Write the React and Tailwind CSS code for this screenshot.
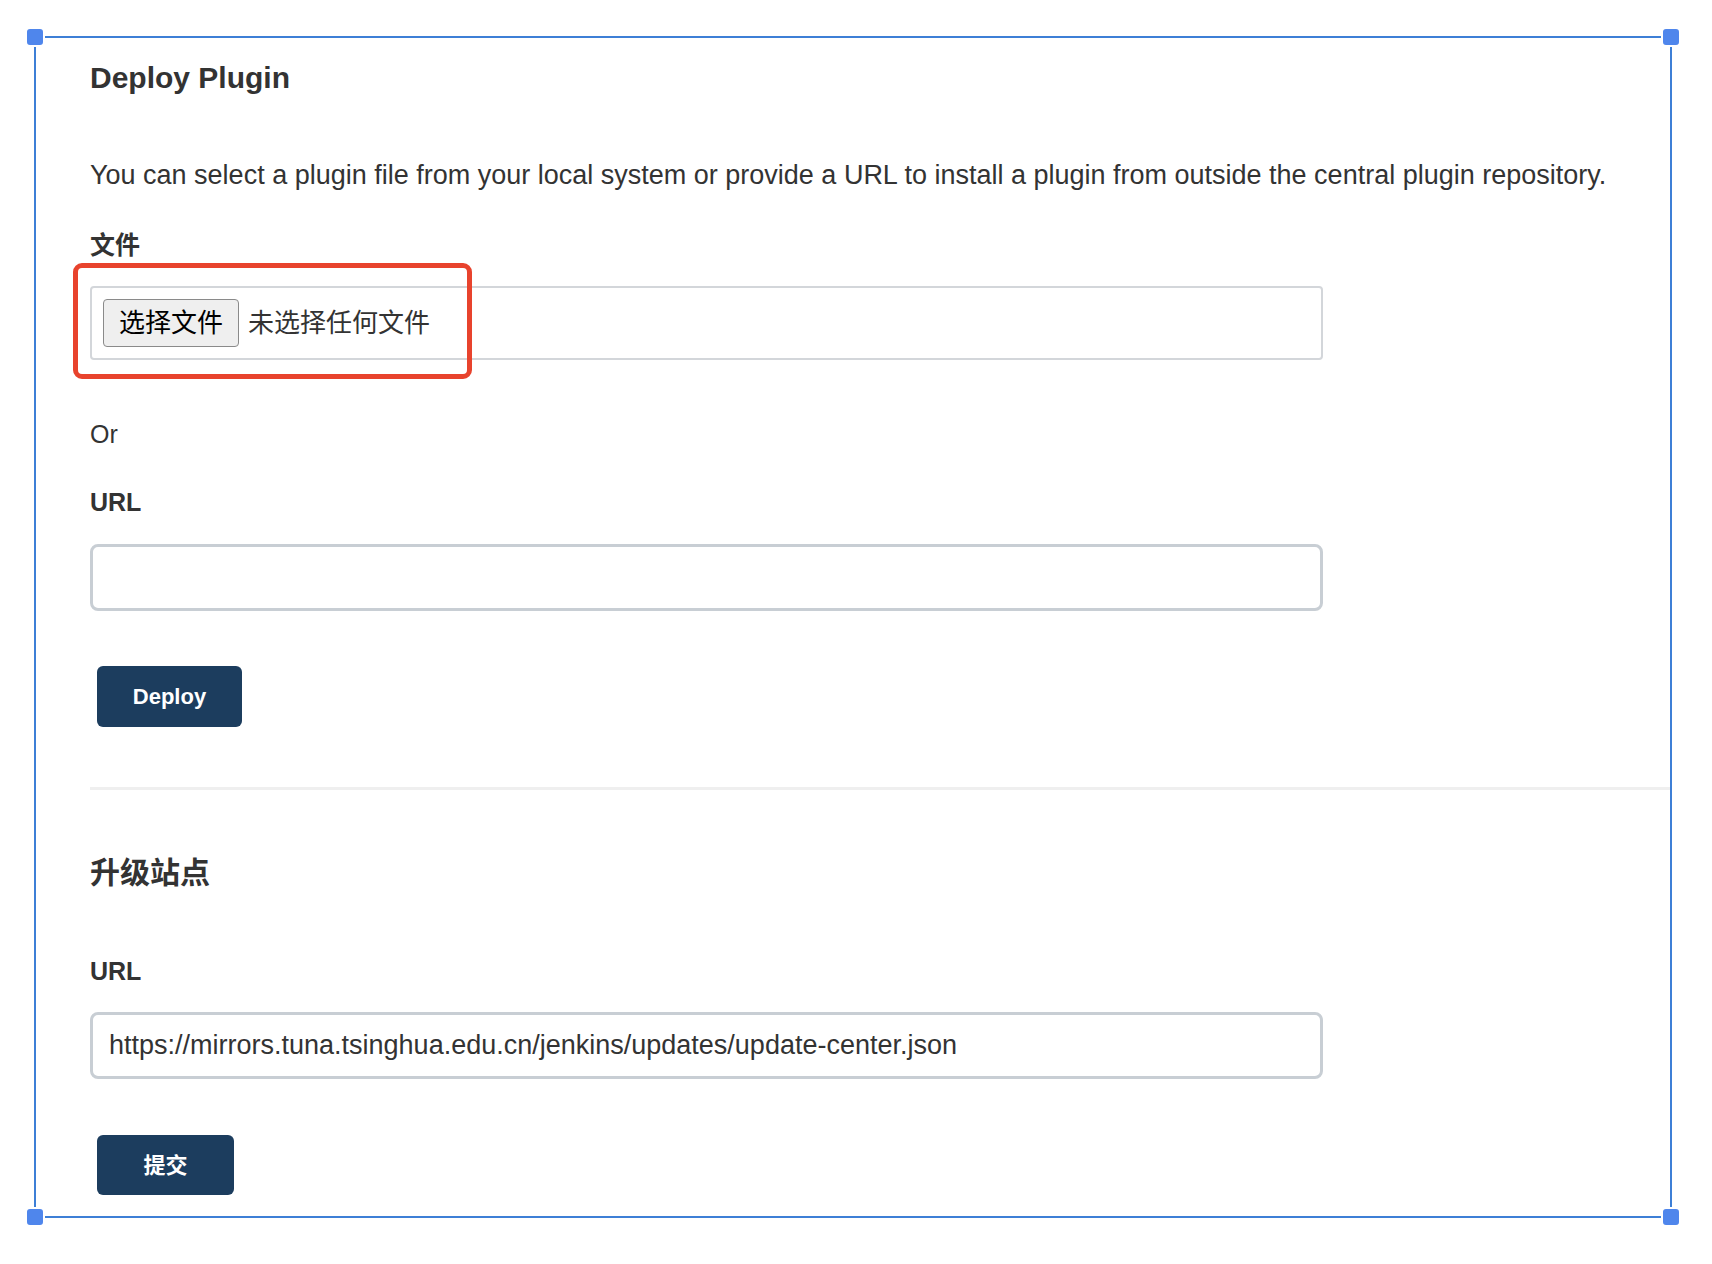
import React from 'react';

const font = "font-['Liberation_Sans','Noto_Sans_CJK_SC',sans-serif]";

function Handle({ className }) {
  return <div className={`absolute w-5 h-5 rounded-[5px] border-2 border-white bg-[#4f86ec] ${className}`} />;
}

export default function App() {
  return (
    <div className={`relative w-[1712px] h-[1264px] bg-white pt-[36px] pl-[34px] text-[#333] ${font}`}>
      {/* selection frame */}
      <div className="relative w-[1638px] h-[1182px] border-2 border-[#3d7fd6] pt-[22px] pl-[54px] flex flex-col items-start">
        <Handle className="-left-[11px] -top-[11px]" />
        <Handle className="-right-[11px] -top-[11px]" />
        <Handle className="-left-[11px] -bottom-[11px]" />
        <Handle className="-right-[11px] -bottom-[11px]" />

        <h1 className="text-[30px] leading-[36px] font-bold">Deploy Plugin</h1>

        <p className="mt-[64px] text-[27px] leading-[30px]">
          You can select a plugin file from your local system or provide a URL to install a plugin from outside the central plugin repository.
        </p>

        <div className="mt-[40px] text-[25px] leading-[30px] font-bold">文件</div>

        <div className="mt-[26px] w-[1233px] h-[74px] border-2 border-[#d3d6da] rounded-[4px] flex items-center gap-[9px] pl-[11px]">
          <div className="w-[136px] h-[48px] flex items-center justify-center bg-[#efefef] border border-[#8a8a8a] rounded-[4px] text-[26px] text-black">
            选择文件
          </div>
          <span className="text-[26px]">未选择任何文件</span>
        </div>

        <div className="mt-[59px] text-[25px] leading-[30px]">Or</div>

        <div className="mt-[38px] text-[25px] leading-[30px] font-bold">URL</div>

        <input
          className="mt-[27px] block w-[1233px] h-[67px] border-[3px] border-[#c8ced4] rounded-[8px] px-[16px] text-[27px] outline-none"
          readOnly
          value=""
        />

        <button className="mt-[55px] ml-[7px] w-[145px] h-[61px] rounded-[6px] bg-[#1c3d5e] text-white text-[22px] font-bold">
          Deploy
        </button>

        <div className="mt-[60px] self-stretch h-[3px] bg-[#efefef]" />

        <h2 className="mt-[65px] text-[30px] leading-[36px] font-bold">升级站点</h2>

        <div className="mt-[65px] text-[25px] leading-[30px] font-bold">URL</div>

        <input
          className="mt-[26px] block w-[1233px] h-[67px] border-[3px] border-[#c8ced4] rounded-[8px] px-[16px] text-[27px] text-[#333] outline-none"
          readOnly
          value="https://mirrors.tuna.tsinghua.edu.cn/jenkins/updates/update-center.json"
        />

        <button className="mt-[56px] ml-[7px] w-[137px] h-[60px] rounded-[6px] bg-[#1c3d5e] text-white text-[22px] font-bold">
          提交
        </button>
      </div>

      {/* red highlight annotation */}
      <div className="absolute left-[73px] top-[263px] w-[399px] h-[116px] border-[5px] border-[#e8432d] rounded-[9px]" />
    </div>
  );
}
